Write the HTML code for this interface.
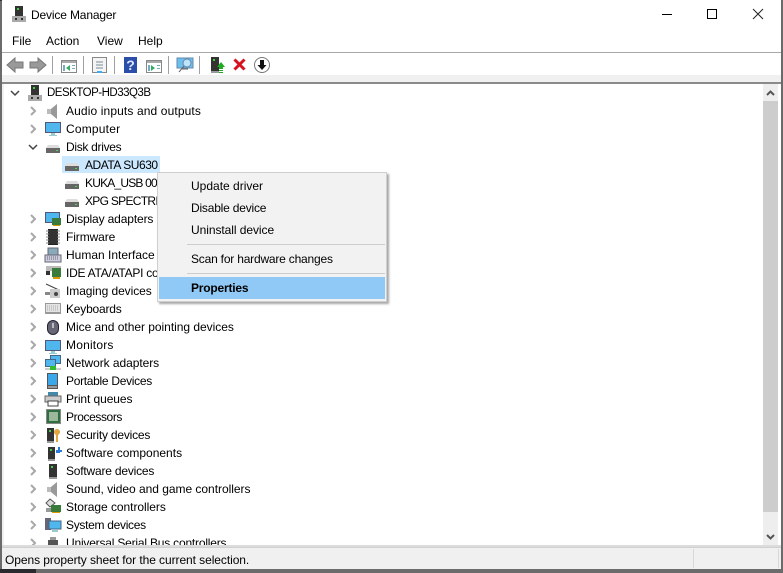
<!DOCTYPE html>
<html><head><meta charset="utf-8">
<style>
html,body{margin:0;padding:0;width:783px;height:573px;overflow:hidden;background:#6b6b6b}
body{position:relative;font-family:"Liberation Sans",sans-serif;font-size:12px;color:#000}
.a{position:absolute}
#win{left:2px;top:0;width:779px;height:569px;background:#fff;overflow:hidden}
.t{position:absolute;white-space:nowrap;font-size:12px;line-height:18px;height:18px}
svg{position:absolute;overflow:visible}
.m{position:absolute;white-space:nowrap;font-size:12px;line-height:18px}
.sep{position:absolute;top:56px;width:1px;height:18px;background:#a0a0a0}
</style></head><body>
<div class="a" style="left:0;top:0;width:42px;height:1px;background:#333"></div>
<div class="a" style="left:0;top:569px;width:36px;height:4px;background:#2a2a2e"></div>
<div class="a" id="win" style="left:2px;top:0"></div>

<!-- title bar -->
<svg style="left:11px;top:6px" width="16" height="16" viewBox="0 0 16 16"><rect x="4" y="0" width="8" height="10" fill="#333"/><rect x="6" y="2" width="2" height="2" fill="#4c4"/><path d="M1 10h14v6H1z" fill="#aaa"/><rect x="4" y="12" width="2" height="2" fill="#333"/><rect x="10" y="12" width="2" height="2" fill="#333"/></svg>
<div class="a" style="left:31px;top:7px;font-size:12px;line-height:16px;white-space:nowrap;letter-spacing:-.15px">Device Manager</div>
<div class="a" style="left:662px;top:14px;width:10px;height:1px;background:#000"></div>
<div class="a" style="left:707px;top:9px;width:8px;height:8px;border:1px solid #000"></div>
<svg style="left:753px;top:9px" width="10" height="10"><path d="M0 0L10 10M10 0L0 10" stroke="#222" stroke-width="1" fill="none"/></svg>

<!-- menu -->
<div class="m" style="left:12px;top:32px">File</div>
<div class="m" style="left:46px;top:32px">Action</div>
<div class="m" style="left:97px;top:32px">View</div>
<div class="m" style="left:138px;top:32px">Help</div>
<div class="a" style="left:2px;top:52px;width:779px;height:1px;background:#a8a8a8"></div>

<!-- toolbar -->
<svg style="left:7px;top:57px" width="16" height="16"><path d="M0 8L8 1V5H16V11H8V15Z" fill="#999" stroke="#777"/></svg>
<svg style="left:30px;top:57px" width="16" height="16"><path d="M16 8L8 1V5H0V11H8V15Z" fill="#999" stroke="#777"/></svg>
<div class="sep" style="left:52px"></div>
<svg style="left:61px;top:60px" width="16" height="13"><rect x=".5" y=".5" width="15" height="12" fill="#fff" stroke="#888"/><rect x="1" y="1" width="14" height="2" fill="#aaa"/><path d="M9 5V11L5 8Z" fill="#3a6"/><path d="M2 5h2v6H2zM11 5h3v1h-3zM11 8h3v1h-3z" fill="#7ab"/></svg>
<div class="sep" style="left:83px"></div>
<svg style="left:92px;top:57px" width="15" height="16"><rect x=".5" y=".5" width="14" height="15" fill="#f4f4f4" stroke="#888"/><path d="M4 5h7M4 8h7M4 11h7" stroke="#7a8a9a"/><rect x="5" y="14" width="5" height="2" fill="#4ae"/></svg>
<div class="sep" style="left:114px"></div>
<div class="a" style="left:124px;top:57px;width:13px;height:16px;background:#2b4fa8;color:#dfe6ff;font:bold 14px/16px 'Liberation Sans',sans-serif;text-align:center">?</div>
<svg style="left:146px;top:60px" width="16" height="13"><rect x=".5" y=".5" width="15" height="12" fill="#fff" stroke="#888"/><rect x="1" y="1" width="14" height="2" fill="#aaa"/><path d="M5 5V11L9 8Z" fill="#3a6"/><path d="M2 5h2v6H2zM11 5h3v1h-3zM11 8h3v1h-3z" fill="#7ab"/></svg>
<div class="sep" style="left:168px"></div>
<svg style="left:177px;top:57px" width="17" height="16"><rect x="0" y="1" width="16" height="10" fill="#6cc0f0" stroke="#68a"/><circle cx="10" cy="6" r="4" fill="#bfe3f8" stroke="#68a"/><path d="M7 9L2 15M5 12H11" stroke="#666"/></svg>
<div class="sep" style="left:199px"></div>
<svg style="left:211px;top:57px" width="15" height="16"><rect x="0" y="0" width="8" height="14" fill="#333"/><rect x="2" y="2" width="2" height="2" fill="#4c4"/><rect x="0" y="14" width="8" height="2" fill="#999"/><path d="M6 10L10 5L14 10H12V12H8V10Z" fill="#2a2"/><path d="M8 13h4v1H8zM8 15h4v1H8z" fill="#2a2"/></svg>
<svg style="left:233px;top:58px" width="13" height="13"><path d="M1.500 1.500L11.500 11.500M11.500 1.500L1.500 11.500" stroke="#d81020" stroke-width="3" fill="none"/></svg>
<svg style="left:254px;top:57px" width="16" height="16"><circle cx="8" cy="8" r="7.500" fill="#fff" stroke="#777"/><path d="M6 3h4v5h2.500L8 13L3.500 8H6Z" fill="#111"/></svg>

<!-- gap -->
<div class="a" style="left:2px;top:75px;width:779px;height:7px;background:#f0f0f0"></div>
<div class="a" style="left:2px;top:82px;width:779px;height:2px;background:#8a8a8a"></div>
<div class="a" style="left:2px;top:84px;width:2px;height:463px;background:#f0f0f0"></div>

<!-- scrollbar -->
<div class="a" style="left:763px;top:84px;width:15px;height:461px;background:#eee"></div>
<div class="a" style="left:763px;top:101px;width:15px;height:411px;background:#cdcdcd"></div>
<svg style="left:766px;top:90px" width="9" height="6"><path d="M1 5L4.500 1.500L8 5" stroke="#555" stroke-width="2" fill="none"/></svg>
<svg style="left:766px;top:534px" width="9" height="6"><path d="M1 1L4.500 4.500L8 1" stroke="#555" stroke-width="2" fill="none"/></svg>

<!-- selected -->
<div class="a" style="left:62px;top:156px;width:98px;height:17px;background:#cce8ff"></div>

<!-- tree -->
<svg style="left:0;top:0" width="783" height="573">
<g fill="none" stroke="#a8a8a8" stroke-width="2">
<path d="M31 107l4 4l-4 4M31 125l4 4l-4 4M31 215l4 4l-4 4M31 233l4 4l-4 4M31 251l4 4l-4 4M31 269l4 4l-4 4M31 287l4 4l-4 4M31 305l4 4l-4 4M31 323l4 4l-4 4M31 341l4 4l-4 4M31 359l4 4l-4 4M31 377l4 4l-4 4M31 395l4 4l-4 4M31 413l4 4l-4 4M31 431l4 4l-4 4M31 449l4 4l-4 4M31 467l4 4l-4 4M31 485l4 4l-4 4M31 503l4 4l-4 4M31 521l4 4l-4 4M31 539l4 4l-4 4"/>
</g>
<path d="M11 91l4 4l4-4M29 145l4 4l4-4" fill="none" stroke="#444" stroke-width="1.500"/>
</svg>

<!-- desktop -->
<svg style="left:27px;top:85px" width="16" height="16"><rect x="4" y="0" width="8" height="10" fill="#333"/><rect x="6" y="2" width="2" height="2" fill="#4c4"/><path d="M1 10h14v6H1z" fill="#aaa"/><rect x="4" y="12" width="2" height="2" fill="#333"/><rect x="10" y="12" width="2" height="2" fill="#333"/></svg>
<div class="t" style="left:47px;top:84px;font-size:11.5px;letter-spacing:-.5px">DESKTOP-HD33Q3B</div>

<!-- audio -->
<svg style="left:47px;top:104px" width="11" height="15"><path d="M0 5H4L10 0V15L4 10H0Z" fill="#bbb"/><path d="M4 5L10 0V15L4 10Z" fill="#999"/></svg>
<div class="t" style="left:66px;top:102px;letter-spacing:.12px">Audio inputs and outputs</div>
<!-- computer -->
<svg style="left:45px;top:122px" width="16" height="15"><rect x=".5" y=".5" width="15" height="10" fill="#4fb6ee" stroke="#557"/><path d="M6 11h4v2h2v1H4v-1h2z" fill="#9cc"/></svg>
<div class="t" style="left:66px;top:120px;letter-spacing:.2px">Computer</div>
<!-- disk -->
<svg style="left:46px;top:145px" width="14" height="8"><path d="M2 0H12L14 3V8H0V3Z" fill="#ddd"/><rect y="3" width="14" height="5" fill="#666"/><rect x="10" y="5" width="2" height="1" fill="#4d4"/></svg>
<div class="t" style="left:66px;top:138px;letter-spacing:-.3px">Disk drives</div>
<svg style="left:65px;top:163px" width="14" height="8"><path d="M2 0H12L14 3V8H0V3Z" fill="#ddd"/><rect y="3" width="14" height="5" fill="#666"/><rect x="10" y="5" width="2" height="1" fill="#4d4"/></svg>
<div class="t" style="left:85px;top:156px;letter-spacing:-.45px">ADATA SU630</div>
<svg style="left:65px;top:181px" width="14" height="8"><path d="M2 0H12L14 3V8H0V3Z" fill="#ddd"/><rect y="3" width="14" height="5" fill="#666"/><rect x="10" y="5" width="2" height="1" fill="#4d4"/></svg>
<div class="t" style="left:85px;top:174px;letter-spacing:-.8px">KUKA_USB 00</div>
<svg style="left:65px;top:199px" width="14" height="8"><path d="M2 0H12L14 3V8H0V3Z" fill="#ddd"/><rect y="3" width="14" height="5" fill="#666"/><rect x="10" y="5" width="2" height="1" fill="#4d4"/></svg>
<div class="t" style="left:85px;top:192px;letter-spacing:-.7px">XPG SPECTRIX</div>
<!-- display -->
<svg style="left:45px;top:212px" width="16" height="15"><rect x=".5" y=".5" width="14" height="10" fill="#4fb6ee" stroke="#557"/><rect x="7" y="6" width="9" height="7" fill="#3a7a3a"/><rect x="8" y="13" width="7" height="1" fill="#d90"/></svg>
<div class="t" style="left:66px;top:210px;letter-spacing:-.13px">Display adapters</div>
<!-- firmware -->
<svg style="left:46px;top:229px" width="14" height="16"><rect x="2" y="0" width="10" height="16" fill="#222"/><path d="M0 2h14M0 5h14M0 8h14M0 11h14M0 14h14" stroke="#888"/><rect x="3" y="1" width="8" height="14" fill="#333"/></svg>
<div class="t" style="left:66px;top:228px;letter-spacing:-.1px">Firmware</div>
<!-- HID -->
<svg style="left:45px;top:248px" width="16" height="14"><rect x="3" y="0" width="10" height="7" fill="#8ab" stroke="#667"/><rect x="0" y="7" width="16" height="7" fill="#ccd" stroke="#667"/><path d="M2 9h12M2 11h12" stroke="#667" stroke-dasharray="1 1"/></svg>
<div class="t" style="left:66px;top:246px">Human Interface</div>
<!-- IDE -->
<svg style="left:46px;top:266px" width="15" height="14"><rect x="0" y="0" width="15" height="5" fill="#bbb"/><rect x="0" y="5" width="4" height="4" fill="#333"/><rect x="6" y="2" width="9" height="9" fill="#3a7a3a"/><rect x="7" y="11" width="7" height="2" fill="#d90"/></svg>
<div class="t" style="left:66px;top:264px;letter-spacing:-.25px">IDE ATA/ATAPI co</div>
<!-- imaging -->
<svg style="left:45px;top:284px" width="16" height="14"><path d="M1 0L14 6" stroke="#444"/><rect x="5" y="5" width="10" height="9" fill="#ccc"/><circle cx="11" cy="10" r="2" fill="#444"/><rect x="0" y="8" width="5" height="3" fill="#888"/></svg>
<div class="t" style="left:66px;top:282px;letter-spacing:-.07px">Imaging devices</div>
<!-- keyboards -->
<svg style="left:45px;top:303px" width="16" height="11"><rect width="16" height="11" fill="#999"/><rect x="1" y="1" width="14" height="8" fill="#e4e4e4"/><path d="M2 3h12M2 5h12M2 7h12" stroke="#aaa" stroke-dasharray="1 1"/></svg>
<div class="t" style="left:66px;top:300px;letter-spacing:-.2px">Keyboards</div>
<!-- mice -->
<svg style="left:47px;top:320px" width="12" height="15"><rect x=".5" y=".5" width="11" height="14" rx="5.500" fill="#667" stroke="#223"/><rect x="5" y="3" width="2" height="5" fill="#bbb"/></svg>
<div class="t" style="left:66px;top:318px;letter-spacing:-.03px">Mice and other pointing devices</div>
<!-- monitors -->
<svg style="left:45px;top:340px" width="16" height="14"><rect x=".5" y=".5" width="15" height="10" fill="#4fb6ee" stroke="#557"/><path d="M6 11h4v2h2v1H4v-1h2z" fill="#9cc"/></svg>
<div class="t" style="left:66px;top:336px;letter-spacing:.2px">Monitors</div>
<!-- network -->
<svg style="left:45px;top:355px" width="16" height="16"><rect x="5.500" y=".5" width="10" height="8" fill="#4fb6ee" stroke="#468"/><rect x=".5" y="4.500" width="10" height="7" fill="#4fb6ee" stroke="#468"/><path d="M0 14h16" stroke="#ccc" stroke-width="2"/><rect x="5" y="11" width="6" height="4" fill="#3b3"/></svg>
<div class="t" style="left:66px;top:354px;letter-spacing:-.06px">Network adapters</div>
<!-- portable -->
<svg style="left:47px;top:373px" width="12" height="16"><rect width="11" height="16" fill="#555"/><rect x="1" y="1" width="9" height="11" fill="#3aa8ea"/><rect x="1" y="13" width="9" height="2" fill="#999"/></svg>
<div class="t" style="left:66px;top:372px;letter-spacing:-.3px">Portable Devices</div>
<!-- print -->
<svg style="left:45px;top:392px" width="16" height="14"><rect x="3" y="0" width="10" height="5" fill="#48a"/><rect y="4" width="16" height="6" fill="#ccc" stroke="#666"/><rect x="3" y="9" width="10" height="5" fill="#fff" stroke="#444"/></svg>
<div class="t" style="left:66px;top:390px;letter-spacing:-.08px">Print queues</div>
<!-- processors -->
<svg style="left:46px;top:409px" width="15" height="15"><rect width="15" height="15" fill="#888"/><rect x="1" y="1" width="13" height="13" fill="#2f6f3f"/><rect x="3" y="3" width="9" height="9" fill="#9cb89c"/></svg>
<div class="t" style="left:66px;top:408px;letter-spacing:-.4px">Processors</div>
<!-- security -->
<svg style="left:47px;top:428px" width="14" height="15"><rect x="0" y="0" width="7" height="13" fill="#333"/><rect x="2" y="2" width="2" height="2" fill="#4c4"/><rect y="13" width="7" height="2" fill="#999"/><circle cx="10" cy="4" r="3" fill="#e0a840"/><path d="M10 6v8" stroke="#e0a840" stroke-width="2"/></svg>
<div class="t" style="left:66px;top:426px;letter-spacing:-.2px">Security devices</div>
<!-- components -->
<svg style="left:48px;top:446px" width="14" height="15"><rect x="0" y="1" width="7" height="12" fill="#333"/><rect x="2" y="3" width="2" height="2" fill="#4c4"/><rect y="13" width="7" height="2" fill="#999"/><path d="M8 4h2V1h2v3h2v2h-2v1H8z" fill="#2a7ad8"/></svg>
<div class="t" style="left:66px;top:444px">Software components</div>
<!-- software devices -->
<svg style="left:49px;top:464px" width="8" height="15"><rect width="8" height="13" fill="#333"/><rect x="2" y="2" width="2" height="2" fill="#4c4"/><rect y="13" width="8" height="2" fill="#999"/></svg>
<div class="t" style="left:66px;top:462px;letter-spacing:-.2px">Software devices</div>
<!-- sound -->
<svg style="left:47px;top:482px" width="11" height="15"><path d="M0 5H4L10 0V15L4 10H0Z" fill="#bbb"/><path d="M4 5L10 0V15L4 10Z" fill="#999"/></svg>
<div class="t" style="left:66px;top:480px;letter-spacing:-.03px">Sound, video and game controllers</div>
<!-- storage -->
<svg style="left:46px;top:499px" width="15" height="15"><path d="M4 0L9 4L4 8L0 4Z" fill="#ddd" stroke="#555"/><rect x="5" y="6" width="10" height="7" fill="#3a7a3a"/><rect x="0" y="9" width="5" height="4" fill="#999"/><rect x="6" y="13" width="8" height="1" fill="#d90"/></svg>
<div class="t" style="left:66px;top:498px;letter-spacing:-.05px">Storage controllers</div>
<!-- system -->
<svg style="left:45px;top:518px" width="16" height="14"><rect x="0" y="0" width="6" height="12" fill="#667"/><rect x="4" y="3" width="12" height="8" fill="#4fb6ee" stroke="#468"/><path d="M7 13h6" stroke="#9cc" stroke-width="2"/></svg>
<div class="t" style="left:66px;top:516px;letter-spacing:-.3px">System devices</div>
<!-- usb -->
<svg style="left:48px;top:537px" width="10" height="10"><rect x="2" y="0" width="6" height="4" fill="#999"/><rect x="0" y="3" width="10" height="7" fill="#555"/></svg>
<div class="t" style="left:66px;top:534px;letter-spacing:-.2px">Universal Serial Bus controllers</div>

<!-- context menu -->
<div class="a" style="left:157px;top:172px;width:230px;height:130px;background:#f2f2f2;border:1px solid #cfcfcf;box-sizing:border-box;box-shadow:2px 2px 2px rgba(0,0,0,.35)"></div>
<div class="t" style="left:191px;top:177px">Update driver</div>
<div class="t" style="left:191px;top:199px;letter-spacing:-.2px">Disable device</div>
<div class="t" style="left:191px;top:221px;letter-spacing:-.06px">Uninstall device</div>
<div class="a" style="left:187px;top:244px;width:198px;height:1px;background:#cdcdcd"></div>
<div class="t" style="left:191px;top:250px;letter-spacing:-.2px">Scan for hardware changes</div>
<div class="a" style="left:187px;top:273px;width:198px;height:1px;background:#cdcdcd"></div>
<div class="a" style="left:159px;top:277px;width:226px;height:22px;background:#90c8f6"></div>
<div class="t" style="left:191px;top:279px;font-weight:bold;letter-spacing:-.2px">Properties</div>

<!-- status bar -->
<div class="a" style="left:2px;top:545px;width:779px;height:2px;background:#dcdcdc"></div>
<div class="a" style="left:2px;top:547px;width:779px;height:22px;background:#f0f0f0"></div>
<div class="a" style="left:2px;top:547px;width:779px;height:1px;background:#d0d0d0"></div>
<div class="a" style="left:693px;top:549px;width:1px;height:19px;background:#d8d8d8"></div>
<div class="a" style="left:778px;top:549px;width:1px;height:19px;background:#d8d8d8"></div>
<div class="t" style="left:5px;top:551px;letter-spacing:-.07px">Opens property sheet for the current selection.</div>
</body></html>
